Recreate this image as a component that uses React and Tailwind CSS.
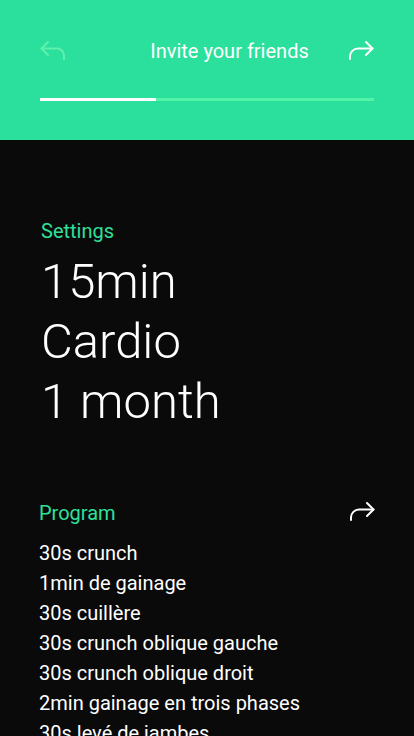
import React from "react";

function ReplyArrow({ className }) {
  return (
    <svg viewBox="0 0 26 20" className={className} fill="none" stroke="currentColor" strokeWidth="2" strokeLinecap="round" strokeLinejoin="round">
      <path d="M8 2 1.5 8.5 8 15" />
      <path d="M1.5 8.5H17a7 7 0 0 1 7 7V19" />
    </svg>
  );
}

function ForwardArrow({ className }) {
  return (
    <svg viewBox="0 0 26 20" className={className} fill="none" stroke="currentColor" strokeWidth="2" strokeLinecap="round" strokeLinejoin="round">
      <path d="M18 2 24.5 8.5 18 15" />
      <path d="M24.5 8.5H10a8 8 0 0 0-8 8V19" />
    </svg>
  );
}

const program = [
  "30s crunch",
  "1min de gainage",
  "30s cuillère",
  "30s crunch oblique gauche",
  "30s crunch oblique droit",
  "2min gainage en trois phases",
  "30s levé de jambes",
  "30s crunch",
];

export default function App() {
  return (
    <main className="h-[736px] w-[414px] overflow-hidden bg-[#0a0a0a] text-white font-['Roboto',sans-serif]">
      <header className="h-[140px] bg-[#2bdf9c] px-10 pt-[39px]">
        <div className="flex h-[22px] items-center justify-between">
          <ReplyArrow className="h-5 w-[26px] text-[#5ff1ac]" />
          <h1 className="ml-[45px] mt-[2px] text-[20px] leading-none text-white">Invite your friends</h1>
          <ForwardArrow className="h-5 w-[26px] text-white" />
        </div>
        <div className="mt-[37px] flex h-[3px]">
          <div className="w-[116px] bg-white" />
          <div className="flex-1 bg-[#55f3a8]" />
        </div>
      </header>

      <section className="px-[41px] pt-[80px]">
        <p className="text-[20px] leading-[22px] text-[#2ee09a]">Settings</p>
        <div className="mt-[10px] text-[49px] font-light leading-[60px]">
          <p>15min</p>
          <p>Cardio</p>
          <p>1 month</p>
        </div>
      </section>

      <section className="px-[39px] pt-[70px]">
        <div className="flex items-center justify-between">
          <p className="text-[20px] leading-[22px] text-[#2ee09a]">Program</p>
          <ForwardArrow className="-mt-1 h-5 w-[26px] text-white" />
        </div>
        <ul className="mt-[14px] text-[20px] leading-[30px]">
          {program.map((p, i) => (
            <li key={i}>{p}</li>
          ))}
        </ul>
      </section>
    </main>
  );
}
